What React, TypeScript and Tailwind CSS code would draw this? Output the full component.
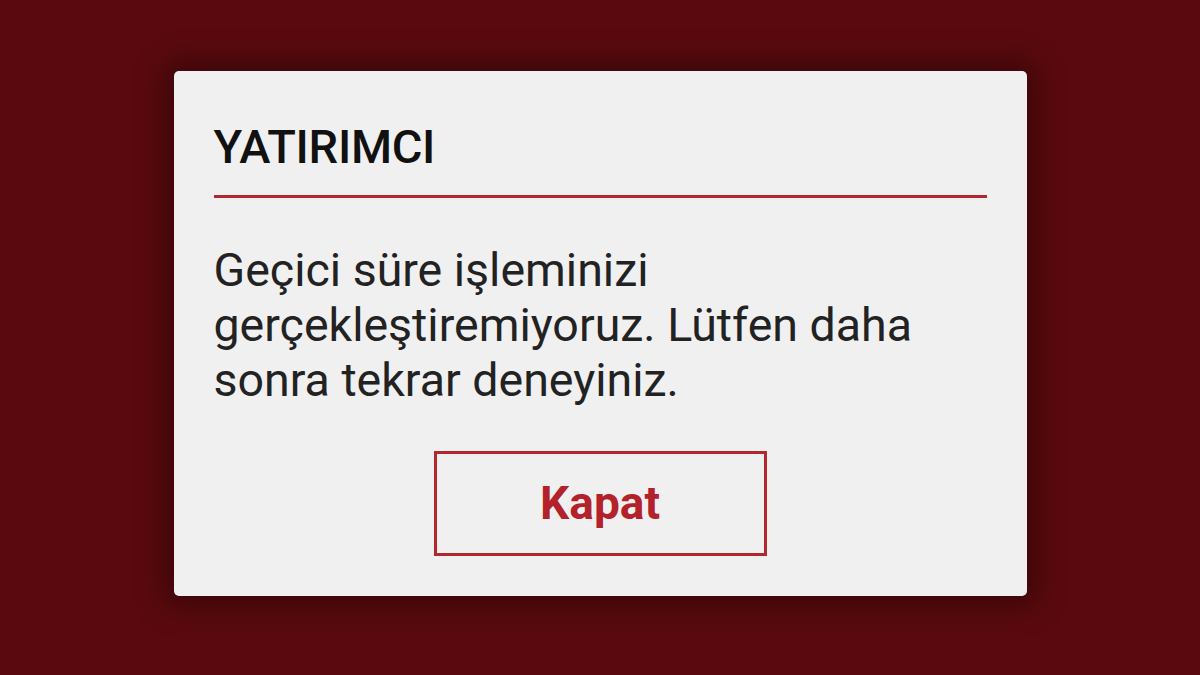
import React from "react";

export default function App() {
  return (
    <div className="w-[1200px] h-[675px] bg-[#5a0a0e] flex items-start justify-center pt-[71px]" style={{ fontFamily: "Roboto, 'Noto Sans', sans-serif" }}>
      <div className="w-[853px] h-[525px] bg-[#f0f0f0] rounded-[5px] shadow-[0_0_30px_10px_rgba(0,0,0,0.35)] px-[40px] pt-[48px] flex flex-col">
        <div className="text-[47px] leading-[56px] font-medium text-[#111] tracking-[-0.3px]">YATIRIMCI</div>
        <div className="mt-[20px] h-[3px] bg-[#b3282d]" />
        <div className="mt-[45px] text-[46.5px] leading-[55px] text-[#222] w-[740px]">
          Geçici süre işleminizi gerçekleştiremiyoruz. Lütfen daha sonra tekrar deneyiniz.
        </div>
        <div className="mt-[43px] flex justify-center">
          <div className="w-[333px] h-[105px] border-[3px] border-[#b3282d] flex items-center justify-center text-[46px] font-bold text-[#b3222a]">
            Kapat
          </div>
        </div>
      </div>
    </div>
  );
}
